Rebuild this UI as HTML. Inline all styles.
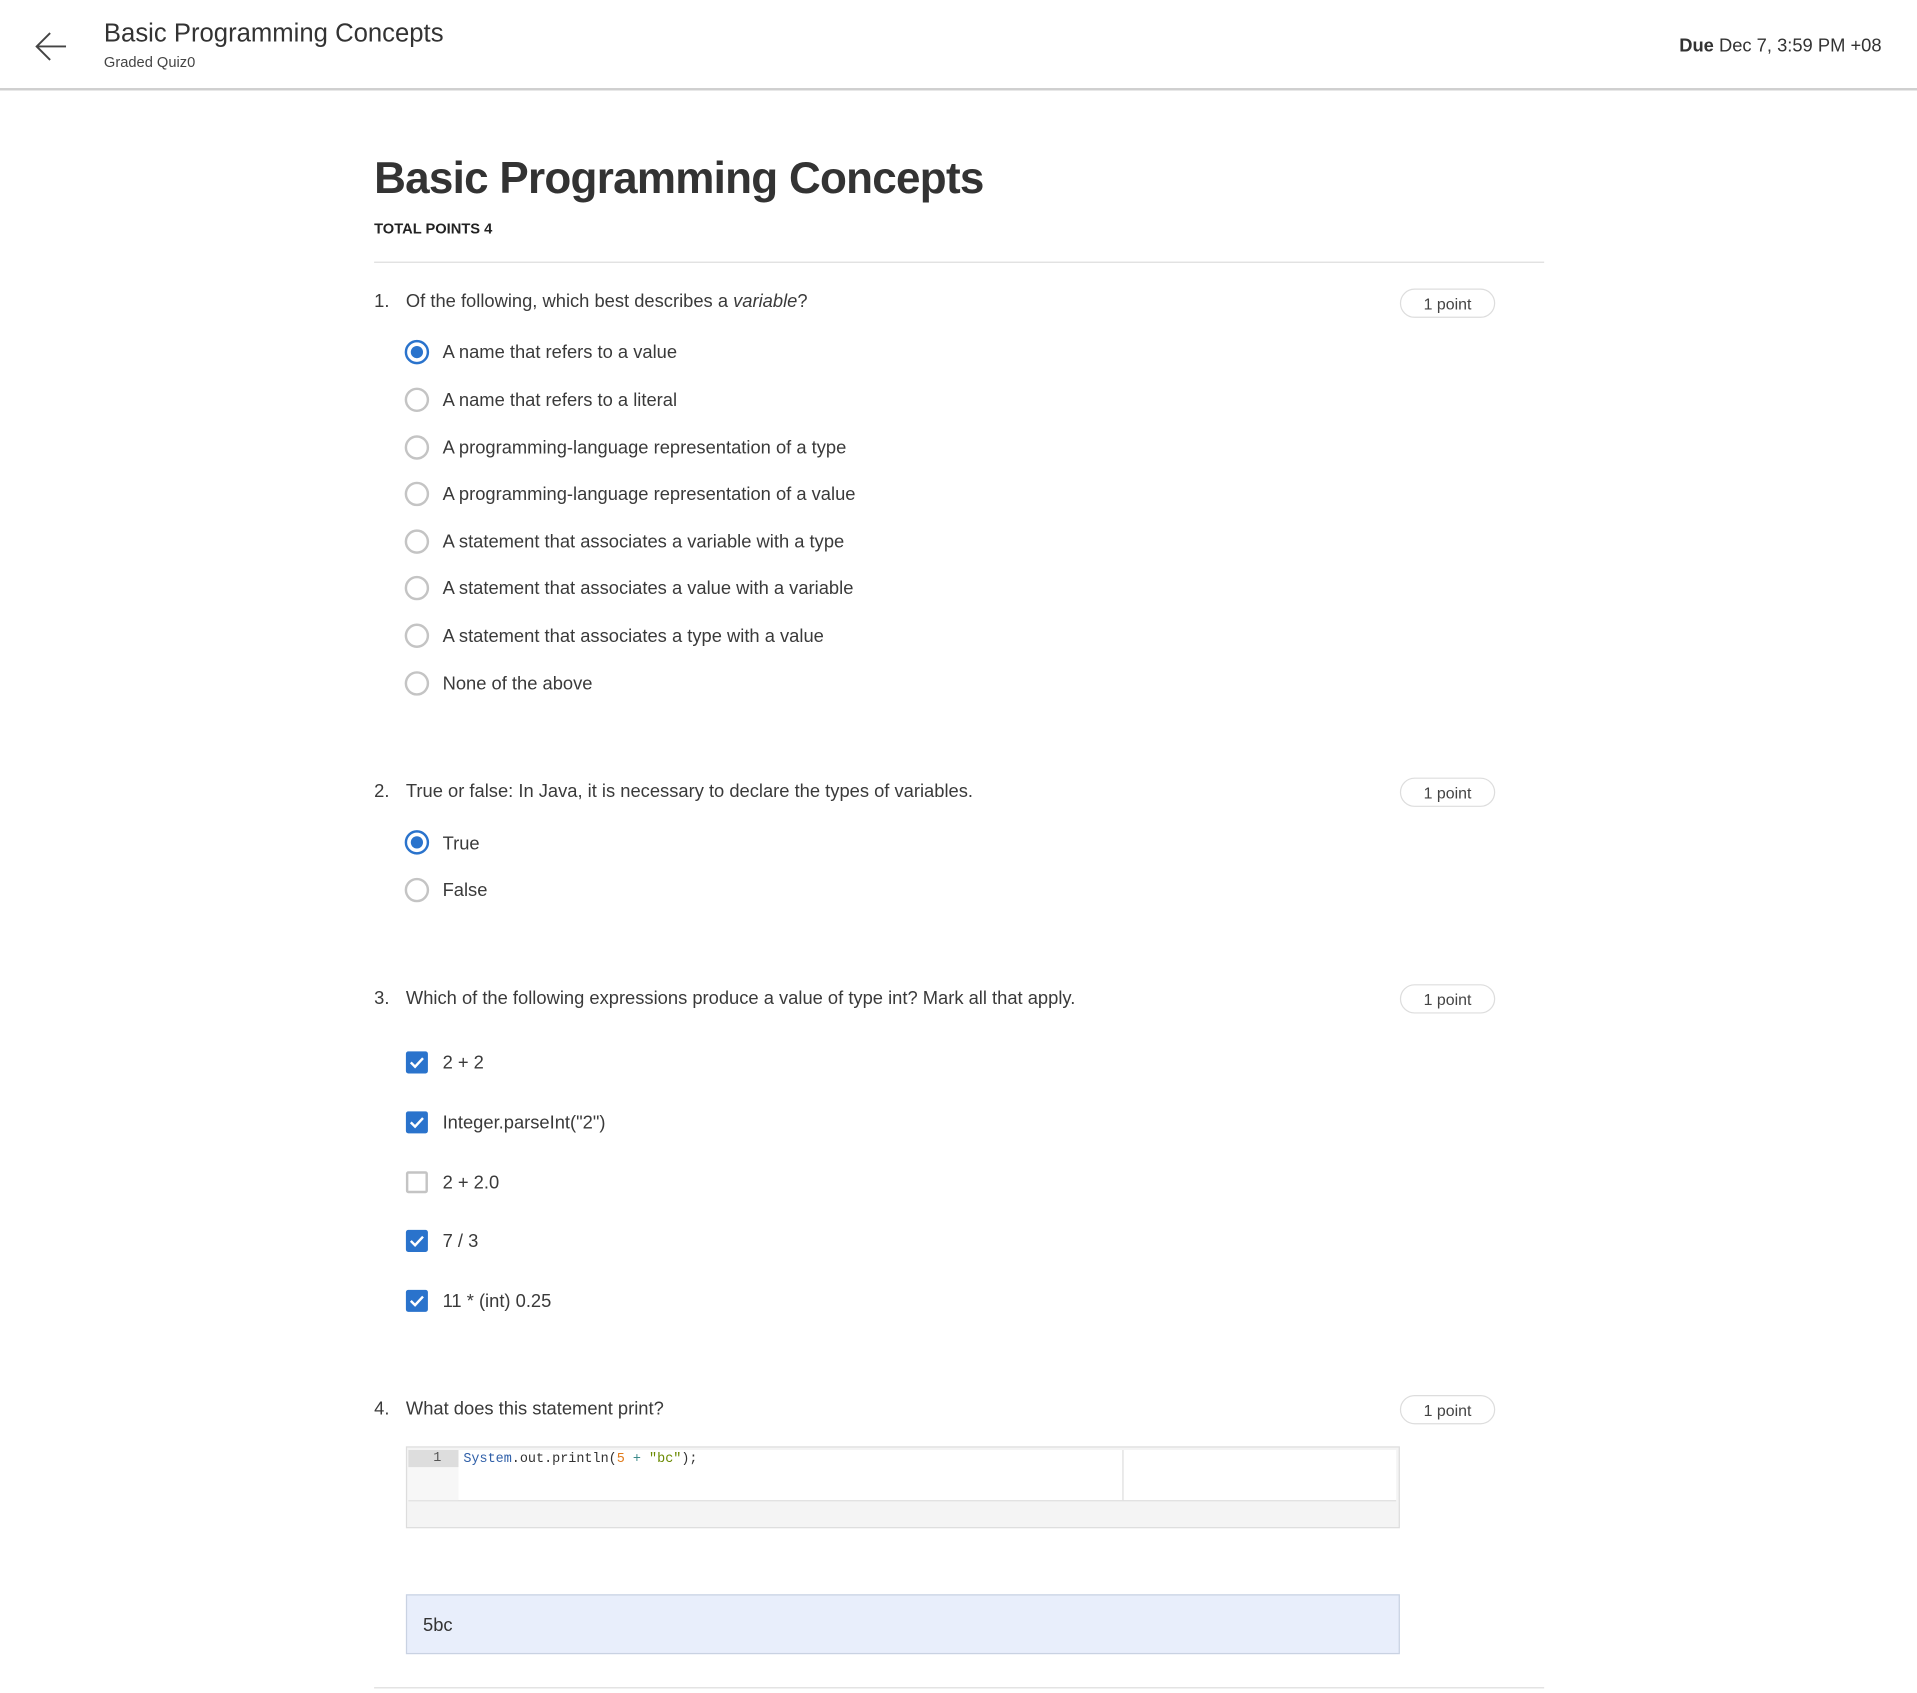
<!DOCTYPE html>
<html><head><meta charset="utf-8"><style>
html,body{margin:0;padding:0;background:#fff;width:1917px;height:1693px;overflow:hidden}
#w{position:absolute;left:0;top:0;width:1568px;height:1385px;transform:scale(1.2226);transform-origin:0 0;font-family:"Liberation Sans",sans-serif;color:#333}
.a{position:absolute;white-space:nowrap}
.t{font-size:15px;color:#3a3a3a;line-height:18px;margin-top:1px}
.r{position:absolute;width:16px;height:16px;border:2px solid #c4c4c4;border-radius:50%;left:331px}
.r.s{border-color:#2a73cc}
.r.s:after{content:"";position:absolute;left:3px;top:3px;width:10px;height:10px;border-radius:50%;background:#2a73cc}
.c{position:absolute;left:332px;width:18px;height:18px;border-radius:2px;box-sizing:border-box}
.c.s{background:#2a73cc}
.c.u{border:2px solid #c4c4c4}
.p{position:absolute;left:1145px;width:76px;height:22px;border:1px solid #ddd;border-radius:12px;font-size:13px;color:#444;text-align:center;line-height:23px}
</style></head><body><div id="w">
<div style="position:absolute;left:0;top:72px;width:1568px;height:2px;background:#cfcfcf"></div>
<svg class="a" style="left:28px;top:24px" width="28" height="28" viewBox="0 0 28 28"><path d="M26 14H3M13 3L2 14l11 11" fill="none" stroke="#444" stroke-width="1.6"/></svg>
<div class="a" style="left:85px;top:16px;font-size:21px;color:#333">Basic Programming Concepts</div>
<div class="a" style="left:85px;top:44px;font-size:12px;color:#444">Graded Quiz0</div>
<div class="a" style="right:29px;top:29px;font-size:15px;color:#333"><b>Due</b> Dec 7, 3:59 PM +08</div>

<div class="a" style="left:306px;top:125px;font-size:36px;letter-spacing:-0.6px;font-weight:bold;color:#333">Basic Programming Concepts</div>
<div class="a" style="left:306px;top:180px;font-size:12px;font-weight:bold;color:#222">TOTAL POINTS 4</div>
<div style="position:absolute;left:306px;top:214px;width:957px;height:1px;background:#ddd"></div>

<div class="a t" style="left:306px;top:237px">1.</div>
<div class="a t" style="left:332px;top:237px">Of the following, which best describes a <i>variable</i>?</div>
<div class="p" style="top:236px">1 point</div>
<div class="r s" style="top:278px"></div><div class="a t" style="left:362px;top:279px">A name that refers to a value</div>
<div class="r" style="top:317px"></div><div class="a t" style="left:362px;top:318px">A name that refers to a literal</div>
<div class="r" style="top:356px"></div><div class="a t" style="left:362px;top:357px">A programming-language representation of a type</div>
<div class="r" style="top:394px"></div><div class="a t" style="left:362px;top:395px">A programming-language representation of a value</div>
<div class="r" style="top:433px"></div><div class="a t" style="left:362px;top:434px">A statement that associates a variable with a type</div>
<div class="r" style="top:471px"></div><div class="a t" style="left:362px;top:472px">A statement that associates a value with a variable</div>
<div class="r" style="top:510px"></div><div class="a t" style="left:362px;top:511px">A statement that associates a type with a value</div>
<div class="r" style="top:549px"></div><div class="a t" style="left:362px;top:550px">None of the above</div>

<div class="a t" style="left:306px;top:638px">2.</div>
<div class="a t" style="left:332px;top:638px">True or false: In Java, it is necessary to declare the types of variables.</div>
<div class="p" style="top:636px">1 point</div>
<div class="r s" style="top:679px"></div><div class="a t" style="left:362px;top:681px">True</div>
<div class="r" style="top:718px"></div><div class="a t" style="left:362px;top:719px">False</div>

<div class="a t" style="left:306px;top:807px">3.</div>
<div class="a t" style="left:332px;top:807px">Which of the following expressions produce a value of type int? Mark all that apply.</div>
<div class="p" style="top:805px">1 point</div>
<div class="c s" style="top:860px"><svg width="18" height="18"><path d="M4 9l3.5 3.5L14 5.5" fill="none" stroke="#fff" stroke-width="2"/></svg></div><div class="a t" style="left:362px;top:860px">2 + 2</div>
<div class="c s" style="top:909px"><svg width="18" height="18"><path d="M4 9l3.5 3.5L14 5.5" fill="none" stroke="#fff" stroke-width="2"/></svg></div><div class="a t" style="left:362px;top:909px">Integer.parseInt("2")</div>
<div class="c u" style="top:958px"></div><div class="a t" style="left:362px;top:958px">2 + 2.0</div>
<div class="c s" style="top:1006px"><svg width="18" height="18"><path d="M4 9l3.5 3.5L14 5.5" fill="none" stroke="#fff" stroke-width="2"/></svg></div><div class="a t" style="left:362px;top:1006px">7 / 3</div>
<div class="c s" style="top:1055px"><svg width="18" height="18"><path d="M4 9l3.5 3.5L14 5.5" fill="none" stroke="#fff" stroke-width="2"/></svg></div><div class="a t" style="left:362px;top:1055px">11 * (int) 0.25</div>

<div class="a t" style="left:306px;top:1143px">4.</div>
<div class="a t" style="left:332px;top:1143px">What does this statement print?</div>
<div class="p" style="top:1141px">1 point</div>
<div style="position:absolute;left:332px;top:1183px;width:811px;height:65px;border:1px solid #ddd;background:#f4f4f4">
 <div style="position:absolute;left:1px;top:2px;width:808px;height:41px;background:#fff;border-bottom:1px solid #ddd">
  <div style="position:absolute;left:0;top:0;width:41px;height:41px;background:#f7f7f7"></div>
  <div style="position:absolute;left:0;top:0;width:41px;height:14px;background:#ddd;font:11px 'Liberation Mono',monospace;text-align:right;line-height:14px;color:#555"><span style="padding-right:14px">1</span></div>
  <div class="a" style="left:45px;top:1px;font:11px 'Liberation Mono',monospace;line-height:14px;color:#333"><span style="color:#2f5fa8">System</span>.out.println(<span style="color:#e07a1a">5</span> <span style="color:#3a8a8a">+</span> <span style="color:#6a8a00">"bc"</span>);</div>
  <div style="position:absolute;left:584px;top:0;width:1px;height:41px;background:#ddd"></div>
 </div>
</div>
<div style="position:absolute;left:332px;top:1304px;width:811px;height:47px;border:1px solid #c9d2e2;background:#e8eefb"><div class="a t" style="left:13px;top:15px;color:#333">5bc</div></div>
<div style="position:absolute;left:306px;top:1380px;width:957px;height:1px;background:#ddd"></div>
</div></body></html>
